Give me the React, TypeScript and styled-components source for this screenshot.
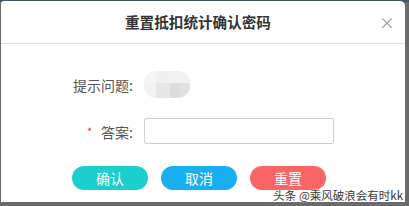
import styled, {createGlobalStyle} from "styled-components";

const GlobalStyle = createGlobalStyle`
  html, body {
    margin: 0;
    padding: 0;
  }
  body {
    width: 409px;
    height: 206px;
    overflow: hidden;
    background: linear-gradient(#3f5863 0, #3f5863 2px, #6a6a6a 2px);
    font-family: "Noto Sans CJK SC", "Noto Sans", sans-serif;
  }
`;

const Modal = styled.div`
  position: relative;
  margin: 1px 0 0 1px;
  width: 404px;
  height: 201px;
  background: #fff;
  border-radius: 3px 5px 0 0;
  display: flex;
  flex-direction: column;
`;

const Header = styled.div`
  height: 42px;
  border-bottom: 1px solid #e2e2e2;
  display: flex;
  align-items: center;
  justify-content: center;
  padding-right: 10px;
  position: relative;
`;

const Title = styled.h3`
  margin: 0;
  font-size: 14.6px;
  font-weight: bold;
  color: #333;
  line-height: 20px;
`;

const Close = styled.span`
  position: absolute;
  right: 10px;
  top: 13px;
  font-size: 16px;
  line-height: 16px;
  color: #9a9a9a;
`;

const Body = styled.div`
  padding-top: 27px;
  display: flex;
  flex-direction: column;
  gap: 20px;
`;

const Row = styled.div`
  display: flex;
  align-items: center;
  gap: 11px;
`;

const Label = styled.label`
  width: 132px;
  text-align: right;
  font-size: 14px;
  color: #555;
  line-height: 20px;
`;

const Star = styled.span`
  color: #e4393c;
  font-size: 11px;
  margin-right: 9px;
  vertical-align: 2px;
`;

const Blur = styled.div`
  width: 46px;
  height: 27px;
  border-radius: 12px;
  overflow: hidden;
  display: grid;
  grid-template-columns: 12px 14px 10px 10px;
  grid-template-rows: 12px 15px;
`;

const Cell = styled.div<{$c: string}>`
  background: ${({$c}) => $c};
`;

const Input = styled.input`
  box-sizing: border-box;
  width: 190px;
  height: 26px;
  border: 1px solid #cfcfcf;
  border-radius: 2px;
  outline: none;
  padding: 0 6px;
`;

const Actions = styled.div`
  display: flex;
  gap: 13px;
  padding: 22px 0 0 71px;
`;

const Button = styled.button<{$bg: string}>`
  width: 76px;
  height: 24px;
  border: none;
  border-radius: 12px;
  background: ${({$bg}) => $bg};
  color: #fff;
  font-family: inherit;
  font-size: 14px;
  line-height: 24px;
  padding: 0;
`;

const Watermark = styled.span`
  position: absolute;
  right: 2px;
  bottom: 0;
  font-size: 11.5px;
  line-height: 14px;
  color: #3a3a3a;
  text-shadow: 0 0 2px #fff, 0 0 1px #fff;
  white-space: nowrap;
`;

const blurCells = [
  "#f5f5f5", "#f0f0f0", "#f2f0f0", "#eef2f5",
  "#f3f3f3", "#e6e6e6", "#dcdcdc", "#e1e1e4",
];

export default function App() {
  return (
    <>
      <GlobalStyle />
      <Modal>
        <Header>
          <Title>重置抵扣统计确认密码</Title>
          <Close>×</Close>
        </Header>
        <Body>
          <Row>
            <Label>提示问题:</Label>
            <Blur>
              {blurCells.map((c, i) => (
                <Cell key={i} $c={c} />
              ))}
            </Blur>
          </Row>
          <Row>
            <Label>
              <Star>*</Star>答案:
            </Label>
            <Input type="text" />
          </Row>
        </Body>
        <Actions>
          <Button $bg="#1ccfcc">确认</Button>
          <Button $bg="#18aef0">取消</Button>
          <Button $bg="#f96565">重置</Button>
        </Actions>
        <Watermark>头条 @乘风破浪会有时kk</Watermark>
      </Modal>
    </>
  );
}
